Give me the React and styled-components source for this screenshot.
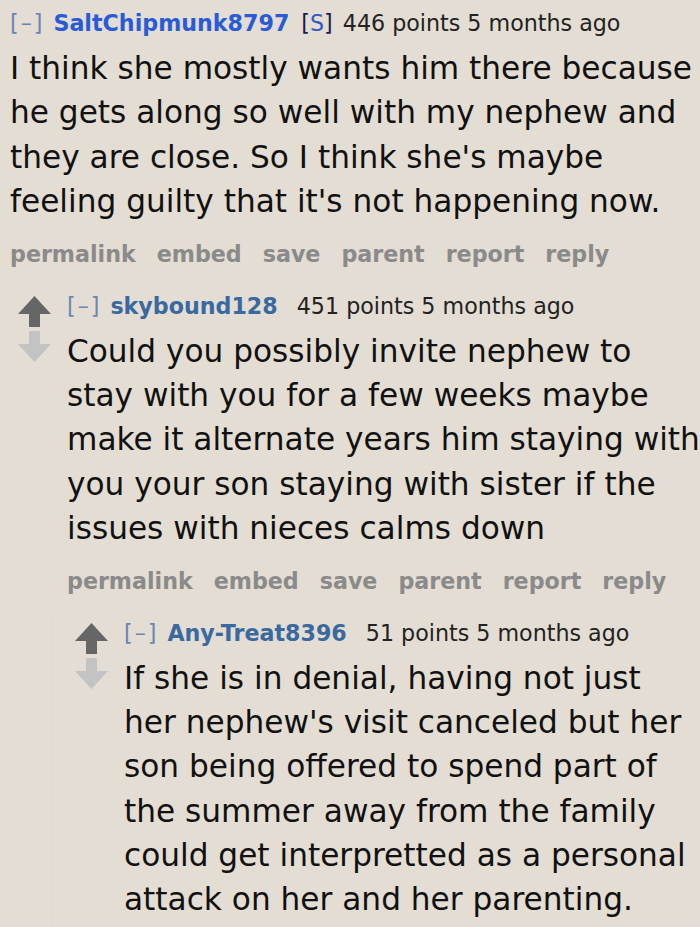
import React from "react";
import styled, { createGlobalStyle } from "styled-components";

const Global = createGlobalStyle`
  html, body { margin: 0; padding: 0; background: #e3ddd3; }
  body { font-family: "DejaVu Sans", Verdana, sans-serif; }
`;

const Page = styled.div`
  width: 700px;
  height: 927px;
  overflow: hidden;
  background: #e3ddd3;
  padding-top: 10px;
  box-sizing: border-box;
`;

const Thread = styled.div`
  margin-left: -61px;
  width: 761px;
`;

const CommentBox = styled.div`
  display: flex;
  flex-direction: column;
`;

const Row = styled.div`
  display: flex;
  align-items: flex-start;
`;

const Midcol = styled.div`
  flex: 0 0 33px;
  margin-left: 22px;
  margin-top: 3px;
  display: flex;
  flex-direction: column;
  gap: 4px;
`;

const Entry = styled.div`
  flex: 1;
  min-width: 0;
  margin-left: 16px;
`;

const Tagline = styled.p`
  margin: 0;
  font-size: 22.2px;
  line-height: 26px;
  color: #222;
  display: flex;
  align-items: baseline;
  white-space: nowrap;
`;

const Expand = styled.span`
  color: #6a86b5;
  letter-spacing: 2px;
  margin-right: 9px;
`;

const Author = styled.a`
  font-weight: bold;
  color: ${(p) => (p.$submitter ? "#2a5bd7" : "#3a69a0")};
  text-decoration: none;
`;

const Attrs = styled.span`
  margin-left: 12px;
  color: #1c1c4c;
`;

const AttrLink = styled.span`
  color: #3358c8;
`;

const Score = styled.span`
  margin-left: ${(p) => (p.$afterAttrs ? 10 : 19)}px;
`;

const Body = styled.div`
  margin-top: 10px;
  font-size: 31.2px;
  line-height: 44.3px;
  color: #111;
`;

const Buttons = styled.ul`
  list-style: none;
  margin: 17.5px 0 0;
  padding: 0;
  display: flex;
  gap: 21px;
  font-size: 22.2px;
  line-height: 26px;
  font-weight: bold;
  color: #8a8a8a;
`;

const Child = styled.div`
  margin-left: 56px;
  margin-top: 24px;
  padding-top: 2px;
  border-left: 1px dotted #d4d4ec;
`;

const Arrow = ({ down }) => (
  <svg width="33" height="31" viewBox="0 0 33 31">
    {down ? (
      <polygon points="11,0 22,0 22,13 33,13 16.5,31 0,13 11,13" fill="#c3c3c3" />
    ) : (
      <polygon points="16.5,0 33,18 22,18 22,31 11,31 11,18 0,18" fill="#666666" />
    )}
  </svg>
);

const buttons = ["permalink", "embed", "save", "parent", "report", "reply"];

const Comment = ({ author, submitter, score, text, children }) => (
  <CommentBox>
    <Row>
      <Midcol>
        <Arrow />
        <Arrow down />
      </Midcol>
      <Entry>
        <Tagline>
          <Expand>[–]</Expand>
          <Author $submitter={submitter}>{author}</Author>
          {submitter && (
            <Attrs>
              [<AttrLink>S</AttrLink>]
            </Attrs>
          )}
          <Score $afterAttrs={submitter}>{score} points 5 months ago</Score>
        </Tagline>
        <Body>{text}</Body>
        <Buttons>
          {buttons.map((b) => (
            <li key={b}>{b}</li>
          ))}
        </Buttons>
      </Entry>
    </Row>
    {children && <Child>{children}</Child>}
  </CommentBox>
);

export default function App() {
  return (
    <>
      <Global />
      <Page>
        <Thread>
          <Comment
            author="SaltChipmunk8797"
            submitter
            score="446"
            text="I think she mostly wants him there because he gets along so well with my nephew and they are close. So I think she's maybe feeling guilty that it's not happening now."
          >
            <Comment
              author="skybound128"
              score="451"
              text="Could you possibly invite nephew to stay with you for a few weeks maybe make it alternate years him staying with you your son staying with sister if the issues with nieces calms down"
            >
              <Comment
                author="Any-Treat8396"
                score="51"
                text="If she is in denial, having not just her nephew's visit canceled but her son being offered to spend part of the summer away from the family could get interpretted as a personal attack on her and her parenting."
              />
            </Comment>
          </Comment>
        </Thread>
      </Page>
    </>
  );
}
